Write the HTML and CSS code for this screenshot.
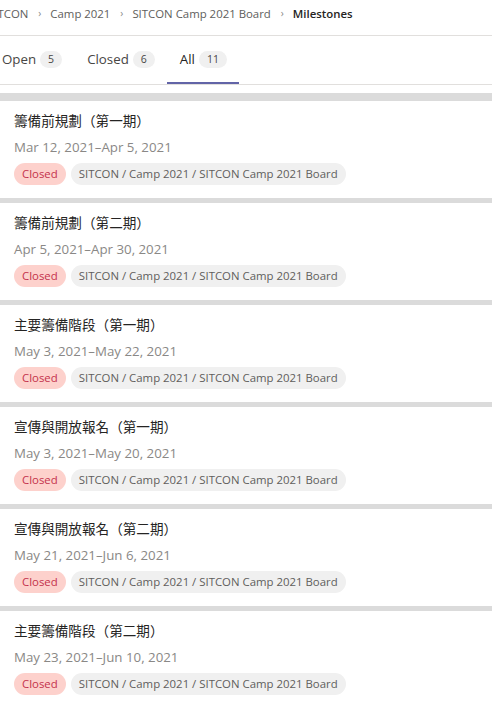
FILE: index.html
```html
<!DOCTYPE html>
<html lang="zh-Hant">
<head>
<meta charset="utf-8">
<link rel="stylesheet" href="styles.css">
</head>
<body>
<div class="page">
  <nav class="breadcrumb">
    <span class="crumb">SITCON</span><span class="sep">›</span>
    <span class="crumb">Camp 2021</span><span class="sep">›</span>
    <span class="crumb">SITCON Camp 2021 Board</span><span class="sep">›</span>
    <span class="crumb current">Milestones</span>
  </nav>
  <div class="tabs">
    <div class="tab">Open <span class="count">5</span></div>
    <div class="tab">Closed <span class="count">6</span></div>
    <div class="tab active">All <span class="count">11</span></div>
  </div>
  <div class="list">
    <div class="card">
      <div class="title">籌備前規劃（第一期）</div>
      <div class="date">Mar 12, 2021–Apr 5, 2021</div>
      <div class="badges"><span class="badge closed">Closed</span><span class="badge path">SITCON / Camp 2021 / SITCON Camp 2021 Board</span></div>
    </div>
    <div class="card">
      <div class="title">籌備前規劃（第二期）</div>
      <div class="date">Apr 5, 2021–Apr 30, 2021</div>
      <div class="badges"><span class="badge closed">Closed</span><span class="badge path">SITCON / Camp 2021 / SITCON Camp 2021 Board</span></div>
    </div>
    <div class="card">
      <div class="title">主要籌備階段（第一期）</div>
      <div class="date">May 3, 2021–May 22, 2021</div>
      <div class="badges"><span class="badge closed">Closed</span><span class="badge path">SITCON / Camp 2021 / SITCON Camp 2021 Board</span></div>
    </div>
    <div class="card">
      <div class="title">宣傳與開放報名（第一期）</div>
      <div class="date">May 3, 2021–May 20, 2021</div>
      <div class="badges"><span class="badge closed">Closed</span><span class="badge path">SITCON / Camp 2021 / SITCON Camp 2021 Board</span></div>
    </div>
    <div class="card">
      <div class="title">宣傳與開放報名（第二期）</div>
      <div class="date">May 21, 2021–Jun 6, 2021</div>
      <div class="badges"><span class="badge closed">Closed</span><span class="badge path">SITCON / Camp 2021 / SITCON Camp 2021 Board</span></div>
    </div>
    <div class="card">
      <div class="title">主要籌備階段（第二期）</div>
      <div class="date">May 23, 2021–Jun 10, 2021</div>
      <div class="badges"><span class="badge closed">Closed</span><span class="badge path">SITCON / Camp 2021 / SITCON Camp 2021 Board</span></div>
    </div>
  </div>
</div>
</body>
</html>
```
FILE: styles.css
```css
html, body {
  margin: 0;
  padding: 0;
  background: #fff;
}
body {
  font-family: "Open Sans", "Noto Sans CJK TC", sans-serif;
  color: #252423;
  overflow: hidden;
}
.page {
  width: 493px;
  overflow: hidden;
}
.breadcrumb {
  display: flex;
  align-items: center;
  box-sizing: border-box;
  height: 36px;
  padding-bottom: 9px;
  border-bottom: 1px solid #e1dfdd;
  margin-left: -12px;
  margin-right: 1px;
  font-size: 11.4px;
  color: #605e5c;
  white-space: nowrap;
}
.breadcrumb .sep {
  font-size: 10px;
  margin: 0 9px 0 10px;
  color: #8a8886;
}
.breadcrumb .current {
  font-weight: 600;
  color: #252423;
}
.tabs {
  display: flex;
  height: 49px;
  box-sizing: border-box;
  border-bottom: 1px solid #e1dfdd;
  margin-left: -10.5px;
  margin-right: 1px;
}
.tab {
  display: flex;
  align-items: center;
  padding: 0 12.5px;
  font-size: 13.3px;
  color: #484644;
  border-bottom: 2px solid transparent;
  white-space: nowrap;
}
.tab.active {
  border-bottom-color: #6264a7;
  color: #252423;
}
.count {
  display: inline-block;
  margin-left: 4px;
  background: #f0f0f0;
  border-radius: 9px;
  font-size: 10.5px;
  line-height: 17px;
  padding: 0 8px;
  color: #484644;
}
.list {
  margin-top: 8px;
  margin-right: 1px;
  background: #dbdbdb;
  padding-top: 8px;
  display: flex;
  flex-direction: column;
  gap: 5px;
}
.card {
  background: #fff;
  padding: 10px 14px 14px;
  height: 97px;
  box-sizing: border-box;
}
.title {
  font-size: 13.6px;
  line-height: 20px;
  color: #252423;
  margin-bottom: 6px;
  text-spacing-trim: space-all;
}
.date {
  font-size: 13.3px;
  line-height: 20px;
  color: #8a8886;
}
.badges {
  margin-top: 6px;
  display: flex;
  gap: 5px;
}
.badge {
  display: inline-block;
  height: 22px;
  line-height: 22px;
  border-radius: 11px;
  font-size: 11.4px;
  padding: 0 8px;
  white-space: nowrap;
}
.badge.closed {
  background: #fdd1cc;
  color: #c4314b;
}
.badge.path {
  background: #f0f0f0;
  color: #605e5c;
}
```
